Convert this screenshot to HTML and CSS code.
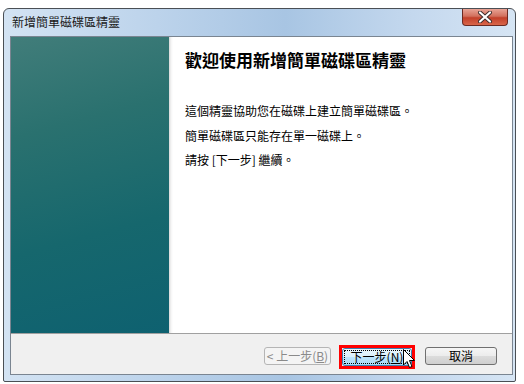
FILE: index.html
```html
<!DOCTYPE html>
<html lang="zh-Hant">
<head>
<meta charset="utf-8">
<link rel="stylesheet" href="styles.css">
</head>
<body>
<div class="window">
  <div class="titlebar">
    <span class="title">新增簡單磁碟區精靈</span>
    <button class="close" aria-label="關閉">
      <svg width="16" height="12" viewBox="0 0 16 12">
        <path d="M3 1.5 L13 10.5 M13 1.5 L3 10.5" stroke="#3a2b2b" stroke-width="4" stroke-linecap="round"/>
        <path d="M3 1.5 L13 10.5 M13 1.5 L3 10.5" stroke="#ffffff" stroke-width="2.2" stroke-linecap="round"/>
      </svg>
    </button>
  </div>
  <div class="client">
    <div class="main">
      <div class="side"></div>
      <div class="content">
        <h1 class="heading">歡迎使用新增簡單磁碟區精靈</h1>
        <p class="line">這個精靈協助您在磁碟上建立簡單磁碟區。</p>
        <p class="line">簡單磁碟區只能存在單一磁碟上。</p>
        <p class="line">請按 [下一步] 繼續。</p>
      </div>
    </div>
    <div class="footer">
      <button class="btn btn-back" disabled>&lt; 上一步(<u>B</u>)</button>
      <div class="next-wrap">
        <button class="btn btn-next"><span class="focus">下一步(<u>N</u>)</span></button>
        <div class="highlight"></div>
        <svg class="cursor" width="12" height="20" viewBox="0 0 12 20">
          <path d="M0.5 0.5 L0.5 16 L4 12.5 L6.5 18.5 L9 17.5 L6.5 11.5 L11.5 11.5 Z" fill="#ffffff" stroke="#000000" stroke-width="1"/>
        </svg>
      </div>
      <button class="btn btn-cancel">取消</button>
    </div>
  </div>
</div>
</body>
</html>
```
FILE: styles.css
```css
* { box-sizing: border-box; }
html, body { margin: 0; padding: 0; background: #ffffff; }
body {
  font-family: "Noto Sans CJK TC", "Noto Sans", sans-serif;
  font-size: 12px;
  color: #000;
  padding: 8px 0 0 3px;
}
.window {
  width: 513px;
  height: 374px;
  border: 1px solid #4a4f55;
  border-radius: 6px 6px 2px 2px;
  background: linear-gradient(90deg, #d3e3f3 0%, #bcd3eb 30%, #a8c5e3 55%, #c4d8ee 80%, #d6e5f4 100%);
  padding: 0 2px 6px 6px;
  display: flex;
  flex-direction: column;
}
.titlebar {
  height: 27px;
  display: flex;
  align-items: flex-start;
  justify-content: space-between;
  flex: none;
}
.title {
  margin-top: 4px;
  margin-left: 2px;
  font-size: 12px;
  line-height: 18px;
  color: #1a1a1a;
}
.close {
  margin: 0 5px 0 0;
  width: 46px;
  height: 17px;
  border: 1px solid #6b2a22;
  border-top: none;
  border-radius: 0 0 4px 4px;
  background: linear-gradient(180deg, #e8a395 0%, #d2705d 45%, #c2402a 55%, #d9664a 100%);
  display: flex;
  align-items: center;
  justify-content: center;
  padding: 0;
}
.client {
  flex: 1;
  border: 1px solid #7a8591;
  background: #f0f0f0;
  display: flex;
  flex-direction: column;
  overflow: hidden;
}
.main {
  flex: 1;
  display: flex;
  border-bottom: 1px solid #a0a0a0;
  background: #fff;
}
.side {
  width: 158px;
  flex: none;
  background: linear-gradient(165deg, #417d7a 0%, #2a716f 30%, #16676d 65%, #0e6170 100%);
}
.content {
  flex: 1;
  padding: 13px 16px 0 16px;
  background: linear-gradient(90deg, #d8d8d8 0px, #f4f4f4 2px, #ffffff 4px);
}
.heading {
  margin: 0 0 29px 0;
  font-size: 17px;
  line-height: 20px;
  font-weight: bold;
}
.line {
  margin: 0;
  font-size: 12px;
  line-height: 24.5px;
}
.footer {
  height: 40px;
  flex: none;
  display: flex;
  align-items: flex-start;
  justify-content: flex-end;
  padding: 13px 15px 0 0;
}
.btn {
  height: 18px;
  font-family: inherit;
  font-size: 12px;
  line-height: 14px;
  padding: 0;
  border-radius: 3px;
  border: 1px solid #707070;
  background: linear-gradient(180deg, #f6f6f6 0%, #ececec 50%, #dcdcdc 51%, #cfcfcf 100%);
  color: #000;
}
.btn u { text-decoration: underline; text-underline-offset: 1px; }
.btn-back {
  width: 67px;
  color: #8a8a8a;
  border-color: #b5b5b5;
  background: #f4f4f4;
}
.next-wrap {
  position: relative;
  margin-left: 11px;
  margin-top: 1px;
}
.btn-next {
  width: 70px;
  border-color: #3c7fb1;
  background: linear-gradient(180deg, #eaf6fd 0%, #d9f0fc 50%, #bee6fd 51%, #a7d9f5 100%);
  padding: 1px;
}
.focus {
  display: block;
  height: 14px;
  border: 1px dotted #000;
  line-height: 12px;
}
.highlight {
  position: absolute;
  left: -3px;
  top: -3px;
  width: 76px;
  height: 24px;
  border: 3px solid #ff0000;
}
.cursor {
  position: absolute;
  left: 61px;
  top: 1px;
}
.btn-cancel {
  width: 72px;
  margin-left: 13px;
}
```
